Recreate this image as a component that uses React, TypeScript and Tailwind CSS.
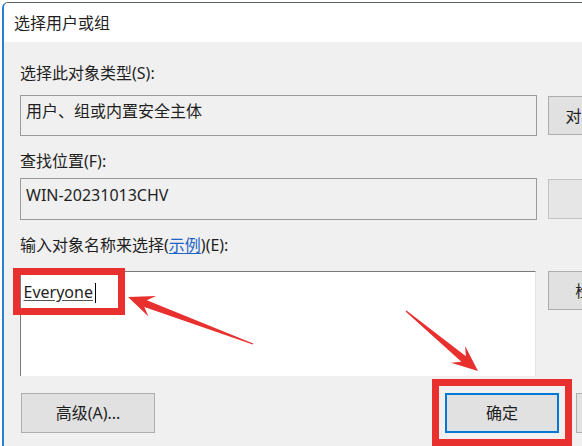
import React from "react";

function arrowPoints(tx: number, ty: number, px: number, py: number, hl: number, hw: number, sw: number): string {
  const dx = px - tx;
  const dy = py - ty;
  const L = Math.hypot(dx, dy);
  const ux = dx / L;
  const uy = dy / L;
  const nx = -uy;
  const ny = ux;
  const bx = px - ux * hl;
  const by = py - uy * hl;
  const jx = px - ux * hl * 0.72;
  const jy = py - uy * hl * 0.72;
  const pts: [number, number][] = [
    [px, py],
    [bx + nx * hw, by + ny * hw],
    [jx + nx * sw, jy + ny * sw],
    [tx + nx * 0.6, ty + ny * 0.6],
    [tx - nx * 0.6, ty - ny * 0.6],
    [jx - nx * sw, jy - ny * sw],
    [bx - nx * hw, by - ny * hw],
  ];
  return pts.map((p) => `${p[0].toFixed(1)},${p[1].toFixed(1)}`).join(" ");
}

export default function App() {
  return (
    <div
      className="relative w-[582px] h-[446px] overflow-hidden bg-white text-[#1f1f1f]"
      style={{ fontFamily: '"Noto Sans", "Noto Sans CJK SC", sans-serif' }}
    >
      <div className="ml-[2px] mt-[2px] h-[444px] flex flex-col overflow-hidden rounded-tl-[6px] border-l-2 border-t border-l-[#2b7fd0] border-t-[#56615f]">
        <div className="h-[39px] shrink-0 bg-white flex items-center pl-[10px] text-[16px] leading-[20px]">
          选择用户或组
        </div>
        <div className="flex-1 bg-[#f0f0f0] pl-[16px] flex flex-col text-[16px] leading-[20px]">
          <div className="mt-[21px] h-[20px] whitespace-nowrap">选择此对象类型(S):</div>
          <div className="mt-[12px] flex items-start">
            <div className="shrink-0 w-[517px] h-[41px] border-[1.5px] border-[#9a9a9a] bg-[#f0f0f0] pl-[5px] pt-[5px] whitespace-nowrap">
              用户、组或内置安全主体
            </div>
            <div className="shrink-0 ml-[11px] mt-[1px] w-[134px] h-[39px] border-[1.5px] border-[#adadad] bg-[#e1e1e1] flex items-center justify-center whitespace-nowrap">
              对象类型(O)...
            </div>
          </div>
          <div className="mt-[15px] h-[20px] whitespace-nowrap">查找位置(F):</div>
          <div className="mt-[7px] flex items-start">
            <div className="shrink-0 w-[517px] h-[42px] border-[1.5px] border-[#9a9a9a] bg-[#f0f0f0] pl-[5px] pt-[6px] whitespace-nowrap">
              WIN-20231013CHV
            </div>
            <div className="shrink-0 ml-[11px] mt-[1px] w-[134px] h-[40px] border-[1.5px] border-[#c2c2c2] bg-[#e6e6e6]"></div>
          </div>
          <div className="mt-[15px] h-[20px] whitespace-nowrap">
            输入对象名称来选择(<span className="text-[#1d64c8] underline underline-offset-2">示例</span>)(E):
          </div>
          <div className="mt-[16px] flex items-start">
            <div className="shrink-0 w-[516px] h-[105px] bg-white border-t-[1.5px] border-l-[1.5px] border-r border-[#7a7a7a] border-r-[#e4e4e4] pl-[2.5px] pt-[10px] flex items-start">
              <span className="underline decoration-[#555] underline-offset-2 leading-[20px]">Everyone</span>
              <span className="ml-[2px] mt-[1px] w-[1px] h-[20px] bg-black"></span>
            </div>
            <div className="shrink-0 ml-[12px] w-[138px] h-[39px] border-[1.5px] border-[#adadad] bg-[#e1e1e1] flex items-center justify-center whitespace-nowrap">
              检查名称(C)
            </div>
          </div>
          <div className="mt-[17px] flex items-start">
            <div className="shrink-0 ml-[1px] w-[134px] h-[40px] border-[1.5px] border-[#adadad] bg-[#e1e1e1] flex items-center justify-center whitespace-nowrap">
              高级(A)...
            </div>
            <div className="shrink-0 ml-[290px] w-[114px] h-[40px] border-2 border-[#0078d7] bg-[#e1e1e1] flex items-center justify-center whitespace-nowrap">
              确定
            </div>
            <div className="shrink-0 ml-[17px] w-[114px] h-[40px] border-[1.5px] border-[#adadad] bg-[#e1e1e1] flex items-center justify-center whitespace-nowrap">
              取消
            </div>
          </div>
        </div>
      </div>

      <div className="absolute left-[13px] top-[268px] w-[112px] h-[47px] border-[7px] border-[#e8302f]"></div>
      <div className="absolute left-[432px] top-[379px] w-[140px] h-[67px] border-[7px] border-[#e8302f]"></div>

      <svg className="absolute inset-0 pointer-events-none" width="582" height="446" viewBox="0 0 582 446">
        <polygon points={arrowPoints(253, 344, 128, 297, 26, 11, 3.5)} fill="#e8302f" />
        <polygon points={arrowPoints(406, 311, 478, 371, 26, 11, 3.5)} fill="#e8302f" />
      </svg>
    </div>
  );
}
